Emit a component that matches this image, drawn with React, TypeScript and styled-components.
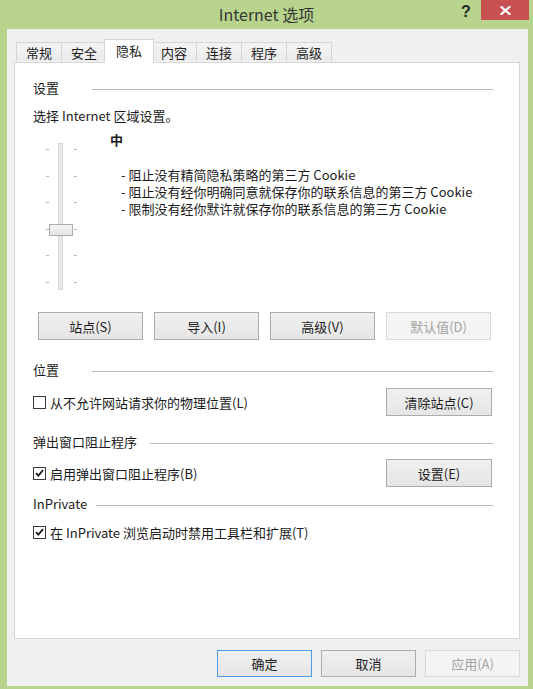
import React from "react";
import styled, { createGlobalStyle } from "styled-components";

const GlobalStyle = createGlobalStyle`
  html, body {
    margin: 0;
    padding: 0;
    background: #b7d38c;
  }
  body {
    font-family: "Noto Sans CJK SC", "Microsoft YaHei", sans-serif;
    font-size: 13px;
    color: #1b1b1b;
  }
  * {
    box-sizing: border-box;
  }
`;

const Frame = styled.div`
  width: 533px;
  height: 689px;
  background: #b7d38c;
  display: flex;
  flex-direction: column;
`;

const TitleBar = styled.div`
  height: 29px;
  flex: none;
  display: grid;
  grid-template-columns: 1fr auto 1fr;
  align-items: start;
`;

const Title = styled.div`
  grid-column: 2;
  font-size: 16px;
  line-height: 28px;
  color: #363636;
  white-space: nowrap;
`;

const Caption = styled.div`
  grid-column: 3;
  justify-self: end;
  display: flex;
  align-items: flex-start;
  margin-right: 4px;
`;

const HelpGlyph = styled.span`
  width: 30px;
  text-align: center;
  font-family: "Liberation Sans", Arial, sans-serif;
  font-weight: bold;
  font-size: 16px;
  line-height: 24px;
  color: #262626;
`;

const CloseButton = styled.div`
  width: 48px;
  height: 20px;
  background: #c75050;
  display: flex;
  align-items: center;
  justify-content: center;
`;

const Body = styled.div`
  flex: 1;
  margin: 0 5px 3px 7px;
  background: #f0f0f0;
  padding: 10px 8px 0 7px;
  display: flex;
  flex-direction: column;
`;

const TabStrip = styled.div`
  display: flex;
  align-items: flex-end;
  height: 24px;
  padding-left: 2px;
  margin-bottom: -1px;
  position: relative;
  z-index: 1;
`;

const Tab = styled.div<{ $active?: boolean }>`
  height: ${(p) => (p.$active ? 24 : 20)}px;
  margin-bottom: ${(p) => (p.$active ? 0 : 1)}px;
  margin-left: ${(p) => (p.$active ? -3 : -1)}px;
  margin-right: ${(p) => (p.$active ? -2 : 0)}px;
  padding: 0 ${(p) => (p.$active ? 11 : 9)}px ${(p) => (p.$active ? 3 : 0)}px;
  border: 1px solid #d5d5d5;
  border-bottom: ${(p) => (p.$active ? "none" : "1px solid transparent")};
  background: ${(p) =>
    p.$active ? "#ffffff" : "linear-gradient(#f3f3f3, #ebebeb)"};
  position: relative;
  z-index: ${(p) => (p.$active ? 2 : 1)};
  display: flex;
  align-items: center;
  font-size: 13px;
  color: #1b1b1b;
  white-space: nowrap;

  &:first-child {
    margin-left: 0;
  }
`;

const Panel = styled.div`
  height: 577px;
  flex: none;
  background: #ffffff;
  border: 1px solid #d5d5d5;
  padding: 16px 26px 0 18px;
  display: flex;
  flex-direction: column;
`;

const GroupHeader = styled.div<{ $top: number; $gap: number }>`
  display: flex;
  align-items: center;
  height: 18px;
  line-height: 18px;
  margin-top: ${(p) => p.$top}px;
  white-space: nowrap;

  &::after {
    content: "";
    flex: 1;
    height: 1px;
    margin-top: 2px;
    margin-left: ${(p) => p.$gap}px;
    background: #b9b9b9;
  }
`;

const Line = styled.div<{ $top: number }>`
  height: 18px;
  line-height: 18px;
  margin-top: ${(p) => p.$top}px;
  white-space: nowrap;
`;

const SliderRow = styled.div`
  display: flex;
  margin-top: 6px;
`;

const SliderBox = styled.div`
  display: flex;
  height: 147px;
  margin: 12px 0 0 13px;
`;

const TickColumn = styled.div`
  width: 3px;
  display: flex;
  flex-direction: column;
  justify-content: space-between;
  padding: 6px 0 7px;
`;

const Tick = styled.span`
  display: block;
  width: 3px;
  height: 1px;
  background: #b5b5b5;
`;

const Track = styled.div`
  position: relative;
  width: 5px;
  margin: 0 11px 0 9px;
  background: #e9e9e9;
  border: 1px solid #d6d6d6;
`;

const Thumb = styled.div`
  position: absolute;
  top: 80px;
  left: -10px;
  width: 24px;
  height: 12px;
  background: linear-gradient(#f5f5f5, #e4e4e4);
  border: 1px solid #adadad;
`;

const Description = styled.div`
  margin-left: 33px;
  display: flex;
  flex-direction: column;
`;

const Level = styled.div`
  height: 18px;
  line-height: 18px;
  font-weight: bold;
`;

const BulletList = styled.div`
  margin-top: 17px;
  padding-left: 11px;
  line-height: 17px;
  white-space: nowrap;
`;

const ButtonRow = styled.div`
  display: flex;
  gap: 11px;
  margin-top: 22px;
  padding-left: 5px;
`;

const Button = styled.div<{
  $disabled?: boolean;
  $default?: boolean;
  $w?: number;
  $h?: number;
}>`
  width: ${(p) => p.$w ?? 105}px;
  height: ${(p) => p.$h ?? 28}px;
  flex: none;
  display: flex;
  align-items: center;
  justify-content: center;
  font-size: 13px;
  white-space: nowrap;
  color: ${(p) => (p.$disabled ? "#a2a2a2" : "#1b1b1b")};
  background: ${(p) =>
    p.$disabled ? "#f4f4f4" : "linear-gradient(#f0f0f0, #e5e5e5)"};
  border: 1px solid
    ${(p) => (p.$disabled ? "#d9d9d9" : p.$default ? "#4a9ded" : "#acacac")};
`;

const OptionRow = styled.div<{ $top: number; $h: number }>`
  display: flex;
  align-items: center;
  justify-content: space-between;
  height: ${(p) => p.$h}px;
  margin-top: ${(p) => p.$top}px;
  padding-right: 1px;
`;

const CheckLabel = styled.label`
  display: flex;
  align-items: center;
  gap: 4px;
  white-space: nowrap;
`;

const CheckBox = styled.span`
  width: 13px;
  height: 13px;
  flex: none;
  display: flex;
  align-items: center;
  justify-content: center;
  background: #ffffff;
  border: 1px solid #3a3a3a;
`;

const Footer = styled.div`
  display: flex;
  justify-content: flex-end;
  gap: 9px;
  margin-top: 11px;
`;

const CheckMark = () => (
  <svg width="9" height="8" viewBox="0 0 9 8">
    <path
      d="M1 4.2 L3.4 6.6 L8 1.2"
      fill="none"
      stroke="#1e1e1e"
      strokeWidth="1.8"
    />
  </svg>
);

const Check = ({ checked, children }: { checked?: boolean; children: React.ReactNode }) => (
  <CheckLabel>
    <CheckBox>{checked && <CheckMark />}</CheckBox>
    <span>{children}</span>
  </CheckLabel>
);

const tabs = ["常规", "安全", "隐私", "内容", "连接", "程序", "高级"];

const bullets = [
  "- 阻止没有精简隐私策略的第三方 Cookie",
  "- 阻止没有经你明确同意就保存你的联系信息的第三方 Cookie",
  "- 限制没有经你默许就保存你的联系信息的第三方 Cookie",
];

export default function App() {
  return (
    <>
      <GlobalStyle />
      <Frame>
        <TitleBar>
          <Title>Internet 选项</Title>
          <Caption>
            <HelpGlyph>?</HelpGlyph>
            <CloseButton>
              <svg width="11" height="9" viewBox="0 0 11 9">
                <path
                  d="M1.5 1 L9.5 8 M9.5 1 L1.5 8"
                  stroke="#ffffff"
                  strokeWidth="2.2"
                  strokeLinecap="square"
                />
              </svg>
            </CloseButton>
          </Caption>
        </TitleBar>

        <Body>
          <TabStrip>
            {tabs.map((t) => (
              <Tab key={t} $active={t === "隐私"}>
                {t}
              </Tab>
            ))}
          </TabStrip>

          <Panel>
            <GroupHeader $top={0} $gap={33}>设置</GroupHeader>
            <Line $top={10}>选择 Internet 区域设置。</Line>

            <SliderRow>
              <SliderBox>
                <TickColumn>
                  {Array.from({ length: 6 }).map((_, i) => (
                    <Tick key={i} />
                  ))}
                </TickColumn>
                <Track>
                  <Thumb />
                </Track>
                <TickColumn>
                  {Array.from({ length: 6 }).map((_, i) => (
                    <Tick key={i} />
                  ))}
                </TickColumn>
              </SliderBox>
              <Description>
                <Level>中</Level>
                <BulletList>
                  {bullets.map((b) => (
                    <div key={b}>{b}</div>
                  ))}
                </BulletList>
              </Description>
            </SliderRow>

            <ButtonRow>
              <Button>站点(S)</Button>
              <Button>导入(I)</Button>
              <Button>高级(V)</Button>
              <Button $disabled>默认值(D)</Button>
            </ButtonRow>

            <GroupHeader $top={21} $gap={33}>位置</GroupHeader>
            <OptionRow $top={9} $h={28}>
              <Check>从不允许网站请求你的物理位置(L)</Check>
              <Button $w={106}>清除站点(C)</Button>
            </OptionRow>

            <GroupHeader $top={17} $gap={13}>弹出窗口阻止程序</GroupHeader>
            <OptionRow $top={8} $h={28}>
              <Check checked>启用弹出窗口阻止程序(B)</Check>
              <Button $w={106}>设置(E)</Button>
            </OptionRow>

            <GroupHeader $top={8} $gap={9}>InPrivate</GroupHeader>
            <OptionRow $top={10} $h={18}>
              <Check checked>在 InPrivate 浏览启动时禁用工具栏和扩展(T)</Check>
            </OptionRow>
          </Panel>

          <Footer>
            <Button $w={95} $h={27} $default>确定</Button>
            <Button $w={95} $h={27}>取消</Button>
            <Button $w={95} $h={27} $disabled>应用(A)</Button>
          </Footer>
        </Body>
      </Frame>
    </>
  );
}
